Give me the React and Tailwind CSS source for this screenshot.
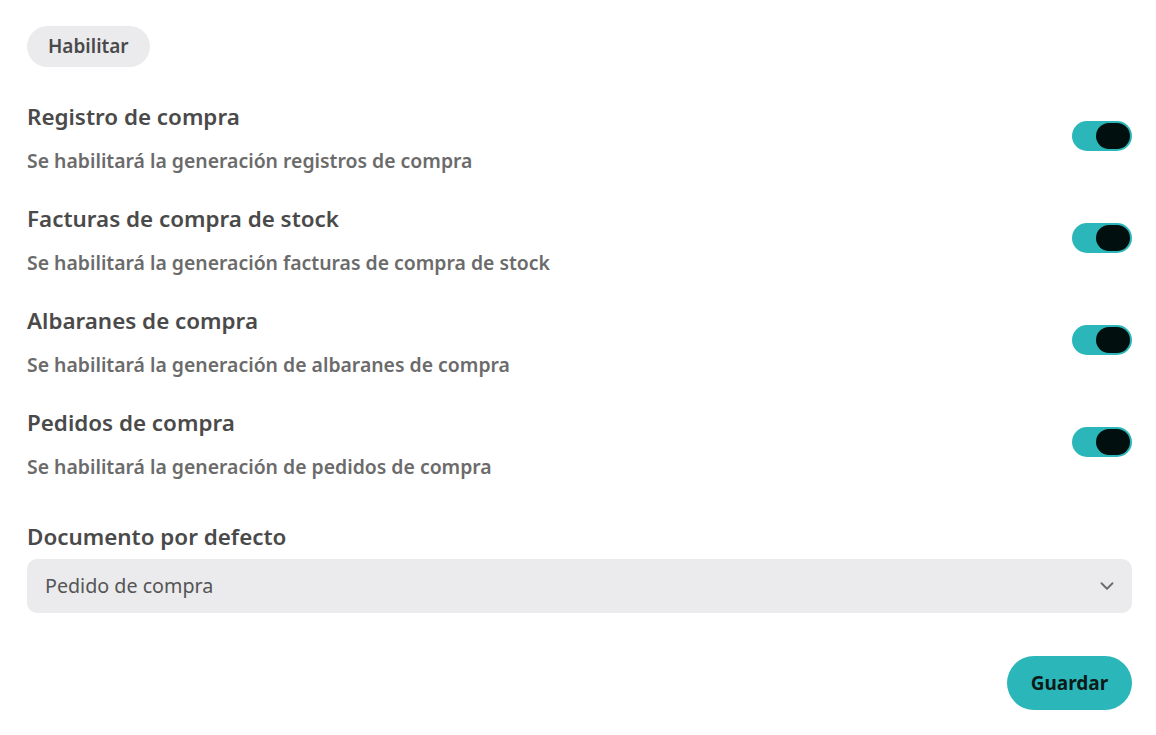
import { ChevronDown } from 'lucide-react'

const options = [
  { title: 'Registro de compra', desc: 'Se habilitará la generación registros de compra' },
  { title: 'Facturas de compra de stock', desc: 'Se habilitará la generación facturas de compra de stock' },
  { title: 'Albaranes de compra', desc: 'Se habilitará la generación de albaranes de compra' },
  { title: 'Pedidos de compra', desc: 'Se habilitará la generación de pedidos de compra' },
]

function Toggle() {
  return (
    <div className="mt-[19px] w-[60px] h-[30px] rounded-full bg-[#2bb7b9] flex items-center justify-end pr-[2px]">
      <div className="w-[34px] h-[26px] rounded-full bg-[#020f0f]" />
    </div>
  )
}

export default function App() {
  return (
    <div className="min-h-screen bg-white pl-[27px] pr-[24px] pt-[26px] pb-6 font-['Noto_Sans',sans-serif]">
      <span className="inline-flex items-center h-[41px] px-[21px] rounded-full bg-[#ebebed] text-[19px] font-semibold text-[#4a4a4a]">
        Habilitar
      </span>

      <div className="mt-[35px] flex flex-col gap-[29px]">
        {options.map((opt) => (
          <div key={opt.title} className="flex items-start justify-between">
            <div className="flex flex-col gap-[15px]">
              <div className="text-[22.4px] leading-[30px] font-semibold text-[#4a4a4a]">{opt.title}</div>
              <div className="text-[19.4px] leading-[28px] font-semibold text-[#6b6b6b]">{opt.desc}</div>
            </div>
            <Toggle />
          </div>
        ))}
      </div>

      <div className="mt-[41px]">
        <div className="text-[22.4px] leading-[30px] font-semibold text-[#4a4a4a]">Documento por defecto</div>
        <div className="mt-[7px] h-[54px] rounded-[10px] bg-[#ebebed] flex items-center justify-between pl-[18px] pr-[14px]">
          <span className="text-[19.7px] text-[#555555]">Pedido de compra</span>
          <ChevronDown className="w-[22px] h-[22px] text-[#6b6b6b]" strokeWidth={2} />
        </div>
        <div className="mt-[43px] flex justify-end">
          <button className="h-[54px] w-[125px] rounded-full bg-[#2bb7b9] text-[19px] font-bold text-[#0d1a1a]">
            Guardar
          </button>
        </div>
      </div>
    </div>
  )
}
